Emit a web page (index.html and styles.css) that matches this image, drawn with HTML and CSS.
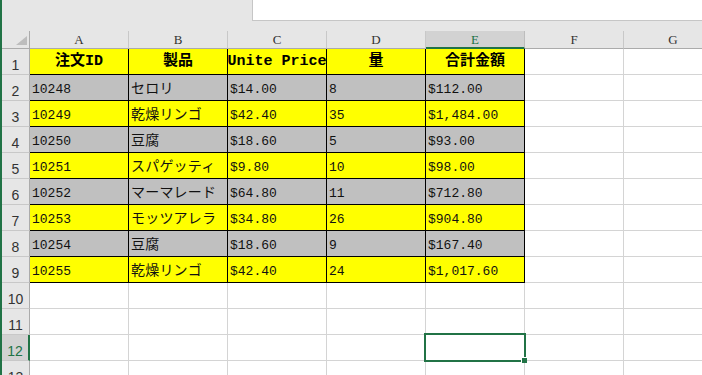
FILE: index.html
```html
<!DOCTYPE html>
<html lang="ja">
<head>
<meta charset="utf-8">
<title>Sheet</title>
<link rel="stylesheet" href="styles.css">
</head>
<body>
<div class="app">
  <div class="topbar"><div class="formula"></div></div>
  <div class="sheet">
    <div class="corner"><svg width="12" height="10" viewBox="0 0 12 10"><polygon points="11,0 11,9 0,9" fill="#bdbdbd"/></svg></div>
    <div class="ch">A</div><div class="ch">B</div><div class="ch">C</div><div class="ch">D</div><div class="ch ch-sel">E</div><div class="ch">F</div><div class="ch">G</div>

    <div class="rh">1</div>
    <div class="c t y hd">注文ID</div><div class="c t y hd">製品</div><div class="c t y hd">Unite Price</div><div class="c t y hd">量</div><div class="c t y hd">合計金額</div><div class="c"></div><div class="c"></div>

    <div class="rh">2</div>
    <div class="c t g">10248</div><div class="c t g jp">セロリ</div><div class="c t g">$14.00</div><div class="c t g">8</div><div class="c t g">$112.00</div><div class="c"></div><div class="c"></div>

    <div class="rh">3</div>
    <div class="c t y">10249</div><div class="c t y jp">乾燥リンゴ</div><div class="c t y">$42.40</div><div class="c t y">35</div><div class="c t y">$1,484.00</div><div class="c"></div><div class="c"></div>

    <div class="rh">4</div>
    <div class="c t g">10250</div><div class="c t g jp">豆腐</div><div class="c t g">$18.60</div><div class="c t g">5</div><div class="c t g">$93.00</div><div class="c"></div><div class="c"></div>

    <div class="rh">5</div>
    <div class="c t y">10251</div><div class="c t y jp">スパゲッティ</div><div class="c t y">$9.80</div><div class="c t y">10</div><div class="c t y">$98.00</div><div class="c"></div><div class="c"></div>

    <div class="rh">6</div>
    <div class="c t g">10252</div><div class="c t g jp">マーマレード</div><div class="c t g">$64.80</div><div class="c t g">11</div><div class="c t g">$712.80</div><div class="c"></div><div class="c"></div>

    <div class="rh">7</div>
    <div class="c t y">10253</div><div class="c t y jp">モッツアレラ</div><div class="c t y">$34.80</div><div class="c t y">26</div><div class="c t y">$904.80</div><div class="c"></div><div class="c"></div>

    <div class="rh">8</div>
    <div class="c t g">10254</div><div class="c t g jp">豆腐</div><div class="c t g">$18.60</div><div class="c t g">9</div><div class="c t g">$167.40</div><div class="c"></div><div class="c"></div>

    <div class="rh">9</div>
    <div class="c t y">10255</div><div class="c t y jp">乾燥リンゴ</div><div class="c t y">$42.40</div><div class="c t y">24</div><div class="c t y">$1,017.60</div><div class="c"></div><div class="c"></div>

    <div class="rh">10</div>
    <div class="c"></div><div class="c"></div><div class="c"></div><div class="c"></div><div class="c"></div><div class="c"></div><div class="c"></div>

    <div class="rh">11</div>
    <div class="c"></div><div class="c"></div><div class="c"></div><div class="c"></div><div class="c"></div><div class="c"></div><div class="c"></div>

    <div class="rh rh-sel">12</div>
    <div class="c"></div><div class="c"></div><div class="c"></div><div class="c"></div><div class="c active"><span class="handle"></span></div><div class="c"></div><div class="c"></div>

    <div class="rh">13</div>
    <div class="c"></div><div class="c"></div><div class="c"></div><div class="c"></div><div class="c"></div><div class="c"></div><div class="c"></div>
  </div>
</div>
</body>
</html>
```
FILE: styles.css
```css
html, body {
  margin: 0;
  padding: 0;
}
body {
  background: #e6e6e6;
  width: 702px;
  height: 375px;
  overflow: hidden;
}
.app {
  height: 375px;
  border-left: 2px solid #217346;
  background: #e6e6e6;
  overflow: hidden;
}
.topbar {
  height: 31px;
  box-sizing: border-box;
}
.formula {
  margin-left: 250px;
  height: 21px;
  box-sizing: border-box;
  background: #fff;
  border-left: 1px solid #c6c6c6;
  border-bottom: 1px solid #c6c6c6;
}
.sheet {
  display: grid;
  grid-template-columns: 28px repeat(7, 99px);
  grid-template-rows: 18px repeat(13, 26px);
  width: max-content;
}
.sheet > div {
  box-sizing: border-box;
}
.corner {
  background: #e6e6e6;
  border-right: 1px solid #ababab;
  border-bottom: 1px solid #ababab;
  display: flex;
  align-items: flex-end;
  justify-content: flex-end;
  padding: 0 1px 2px 0;
}
.corner svg {
  display: block;
}
.ch {
  background: #e6e6e6;
  border-right: 1px solid #c8c8c8;
  border-bottom: 1px solid #ababab;
  font-family: "Liberation Serif", serif;
  font-size: 13px;
  color: #333;
  display: flex;
  align-items: center;
  justify-content: center;
  padding-top: 1px;
}
.ch-sel {
  background: #d2d2d2;
  color: #217346;
  border-bottom: 2px solid #217346;
  border-right-color: #bdbdbd;
}
.rh {
  background: #e6e6e6;
  border-right: 1px solid #ababab;
  border-bottom: 1px solid #c8c8c8;
  font-family: "Liberation Sans", sans-serif;
  font-size: 14px;
  line-height: 14px;
  color: #333;
  display: flex;
  align-items: flex-end;
  justify-content: center;
  padding-bottom: 2px;
}
.rh-sel {
  background: #d2d2d2;
  color: #217346;
  border-right: 2px solid #217346;
}
.c {
  background: #fff;
  border-right: 1px solid #d4d4d4;
  border-bottom: 1px solid #d4d4d4;
  font-family: "Liberation Mono", "Noto Sans CJK JP", monospace;
  font-size: 13px;
  line-height: 13px;
  color: #111;
  display: flex;
  align-items: flex-end;
  padding-left: 2px;
  padding-bottom: 4px;
  white-space: nowrap;
  overflow: hidden;
}
.t {
  border-right-color: #000;
  border-bottom-color: #000;
}
.y {
  background: #ffff00;
}
.g {
  background: #c0c0c0;
}
.jp {
  font-family: "Liberation Mono", "Noto Sans CJK JP", sans-serif;
  font-size: 14px;
  line-height: 14px;
  letter-spacing: 0.2px;
}
.hd {
  font-family: "Liberation Mono", "Noto Sans CJK JP", monospace;
  font-size: 15px;
  line-height: 15px;
  font-weight: bold;
  color: #000;
  justify-content: center;
  align-items: center;
  padding-left: 0;
  padding-bottom: 0;
}
.active {
  position: relative;
  overflow: visible;
  z-index: 2;
}
.active::before {
  content: "";
  position: absolute;
  top: -2px;
  left: -2px;
  right: -2px;
  bottom: -2px;
  border: 2px solid #217346;
}
.handle {
  position: absolute;
  right: -3px;
  bottom: -3px;
  width: 5px;
  height: 5px;
  background: #217346;
  border: 1px solid #fff;
  border-right: 0;
  border-bottom: 0;
}
```
